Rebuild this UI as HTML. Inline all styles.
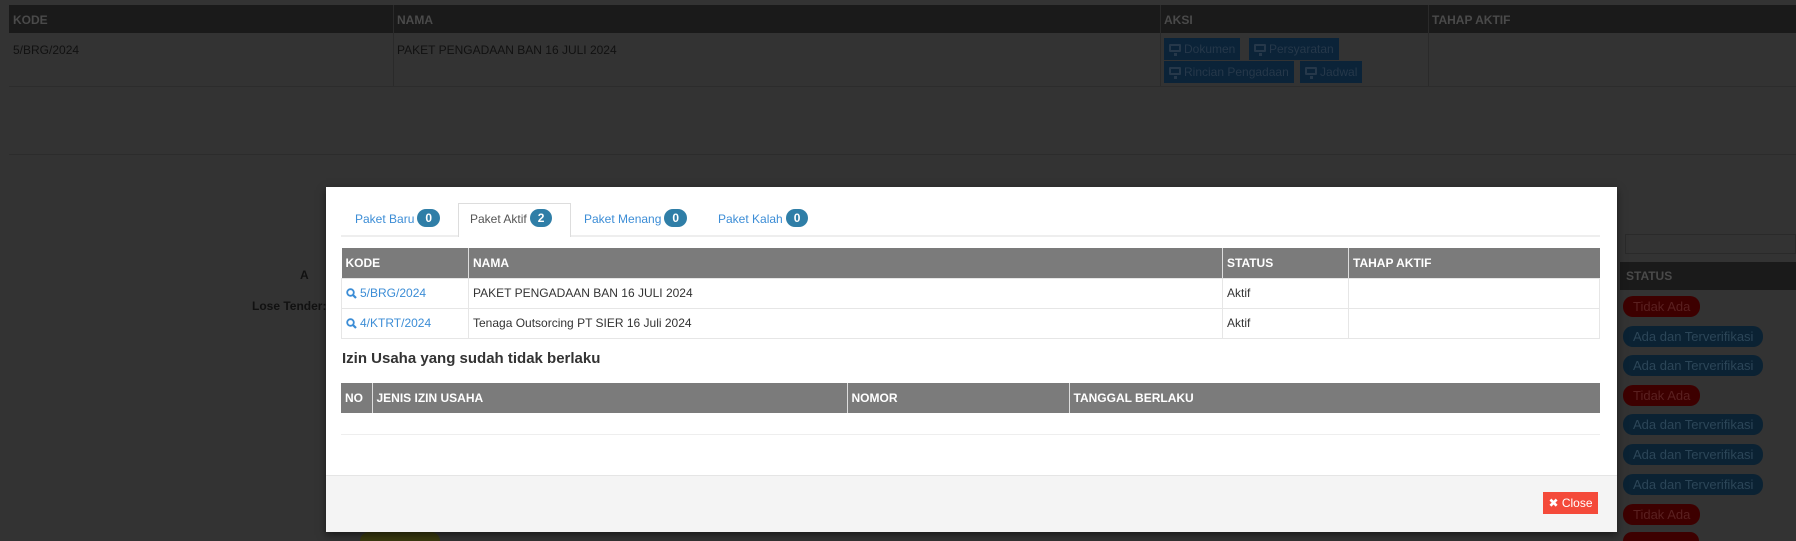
<!DOCTYPE html>
<html style="overflow:hidden;height:541px"><head><meta charset="utf-8"><style>
*{box-sizing:border-box;margin:0;padding:0}
body{width:1796px;height:541px;overflow:hidden;background:#333;font-family:"Liberation Sans",Arial,sans-serif;font-size:12px;position:relative}
.a{position:absolute}
.hd{background:#1a1a1a;color:#4a4a4a;font-weight:bold}
.btn{position:absolute;background:#0b2338;color:#26384a;height:22px;line-height:22px;padding:0 5px 0 20px;font-size:12px;white-space:nowrap}
.btn i{position:absolute;left:5px;top:6px;width:12px;height:8px;border:2px solid #26384a;border-radius:1px}
.btn i:after{content:"";position:absolute;left:3px;top:7px;width:3px;height:3px;background:#26384a}
.bd{position:absolute;left:1623px;height:21px;line-height:21px;border-radius:10px;padding:0 10px;font-size:13px;white-space:nowrap}
.r{background:#3d0000;color:#5a2020}
.b{background:#0b2233;color:#2c4658}
.tab{position:absolute;top:203px;height:33px;line-height:33px;color:#3c8dd6;font-size:12px}
.pill{display:inline-block;background:#2f7ea7;color:#fff;border-radius:9px;height:18px;line-height:18px;padding:0 8px;margin-left:3px;font-size:12px;font-weight:bold;vertical-align:1px}
table{border-collapse:collapse;position:absolute}
th{background:#7b7b7b;color:#fff;text-align:left;font-weight:bold;padding:0 4px;border-left:1px solid #ddd;height:30px}
td{border:1px solid #e6e6e6;padding:0 4px;color:#333;height:30px}
td svg{vertical-align:-2px;margin-right:3px}
</style></head><body>
<div class="a hd" style="left:9px;top:5px;width:1787px;height:28px"></div>
<div class="a" style="left:13px;top:13px;color:#4a4a4a;font-weight:bold">KODE</div>
<div class="a" style="left:397px;top:13px;color:#4a4a4a;font-weight:bold">NAMA</div>
<div class="a" style="left:1164px;top:13px;color:#4a4a4a;font-weight:bold">AKSI</div>
<div class="a" style="left:1432px;top:13px;color:#4a4a4a;font-weight:bold">TAHAP AKTIF</div>
<div class="a" style="left:393px;top:5px;width:1px;height:82px;background:#2a2a2a"></div>
<div class="a" style="left:1160px;top:5px;width:1px;height:82px;background:#2a2a2a"></div>
<div class="a" style="left:1428px;top:5px;width:1px;height:82px;background:#2a2a2a"></div>
<div class="a" style="left:9px;top:86px;width:1787px;height:1px;background:#2c2c2c"></div>
<div class="a" style="left:9px;top:154px;width:1787px;height:1px;background:#2c2c2c"></div>
<div class="a" style="left:13px;top:43px;color:#111">5/BRG/2024</div>
<div class="a" style="left:397px;top:43px;color:#111">PAKET PENGADAAN BAN 16 JULI 2024</div>
<div class="btn" style="left:1164px;top:38px"><i></i>Dokumen</div>
<div class="btn" style="left:1249px;top:38px"><i></i>Persyaratan</div>
<div class="btn" style="left:1164px;top:61px"><i></i>Rincian Pengadaan</div>
<div class="btn" style="left:1300px;top:61px"><i></i>Jadwal</div>
<div class="a" style="left:300px;top:268px;color:#111;font-weight:bold">A</div>
<div class="a" style="left:252px;top:299px;color:#111;font-weight:bold;font-size:12px">Lose Tender:</div>
<div class="a" style="left:1625px;top:234px;width:171px;height:20px;border:1px solid #2a2a2a"></div>
<div class="a hd" style="left:1620px;top:262px;width:176px;height:28px;line-height:28px;padding-left:6px">STATUS</div>
<div class="bd r" style="top:296px">Tidak Ada</div>
<div class="bd b" style="top:326px">Ada dan Terverifikasi</div>
<div class="bd b" style="top:355px">Ada dan Terverifikasi</div>
<div class="bd r" style="top:385px">Tidak Ada</div>
<div class="bd b" style="top:414px">Ada dan Terverifikasi</div>
<div class="bd b" style="top:444px">Ada dan Terverifikasi</div>
<div class="bd b" style="top:474px">Ada dan Terverifikasi</div>
<div class="bd r" style="top:504px">Tidak Ada</div>
<div class="a" style="left:1623px;top:532px;width:76px;height:9px;border-radius:10px 10px 0 0;background:#3d0000"></div>
<div class="a" style="left:360px;top:532px;width:80px;height:9px;border-radius:40px 40px 0 0;background:#3a3a10"></div>
<div class="a" style="left:326px;top:187px;width:1291px;height:345px;background:#fff;box-shadow:0 3px 8px rgba(0,0,0,.5)">
<div class="a" style="left:0;top:288px;width:1291px;height:57px;background:#f4f4f4;border-top:1px solid #e5e5e5"></div>
<div class="a" style="left:1217px;top:305px;width:55px;height:22px;background:#f44a3a;color:#fff;line-height:22px;text-align:center;font-size:12px">✖ Close</div>
</div>
<div class="a" style="left:341px;top:235px;width:1259px;height:2px;background:#eee"></div>
<div class="a" style="left:458px;top:203px;width:113px;height:34px;background:#fff;border:1px solid #ddd;border-bottom:none"></div>
<div class="tab" style="left:355px">Paket Baru<span class="pill">0</span></div>
<div class="tab" style="left:470px;color:#555">Paket Aktif<span class="pill">2</span></div>
<div class="tab" style="left:584px">Paket Menang<span class="pill">0</span></div>
<div class="tab" style="left:718px">Paket Kalah<span class="pill">0</span></div>
<table style="left:341px;top:248px;width:1259px">
<tr><th style="width:127px;border-left:none">KODE</th><th style="width:754px">NAMA</th><th style="width:126px">STATUS</th><th>TAHAP AKTIF</th></tr>
<tr><td style="color:#3c8dd6"><svg width="11" height="11" viewBox="0 0 11 11"><circle cx="4.5" cy="4.5" r="3.3" fill="none" stroke="#3c8dd6" stroke-width="1.8"/><path d="M7 7L10 10" stroke="#3c8dd6" stroke-width="2.2"/></svg>5/BRG/2024</td><td>PAKET PENGADAAN BAN 16 JULI 2024</td><td>Aktif</td><td></td></tr>
<tr><td style="color:#3c8dd6"><svg width="11" height="11" viewBox="0 0 11 11"><circle cx="4.5" cy="4.5" r="3.3" fill="none" stroke="#3c8dd6" stroke-width="1.8"/><path d="M7 7L10 10" stroke="#3c8dd6" stroke-width="2.2"/></svg>4/KTRT/2024</td><td>Tenaga Outsorcing PT SIER 16 Juli 2024</td><td>Aktif</td><td></td></tr>
</table>
<div class="a" style="left:342px;top:350px;font-size:15px;font-weight:bold;color:#333">Izin Usaha yang sudah tidak berlaku</div>
<table style="left:341px;top:383px;width:1259px">
<tr><th style="width:31px;border-left:none;height:29px">NO</th><th style="width:475px">JENIS IZIN USAHA</th><th style="width:222px">NOMOR</th><th>TANGGAL BERLAKU</th></tr>
</table>
<div class="a" style="left:341px;top:434px;width:1259px;height:1px;background:#eee"></div>
</body></html>
